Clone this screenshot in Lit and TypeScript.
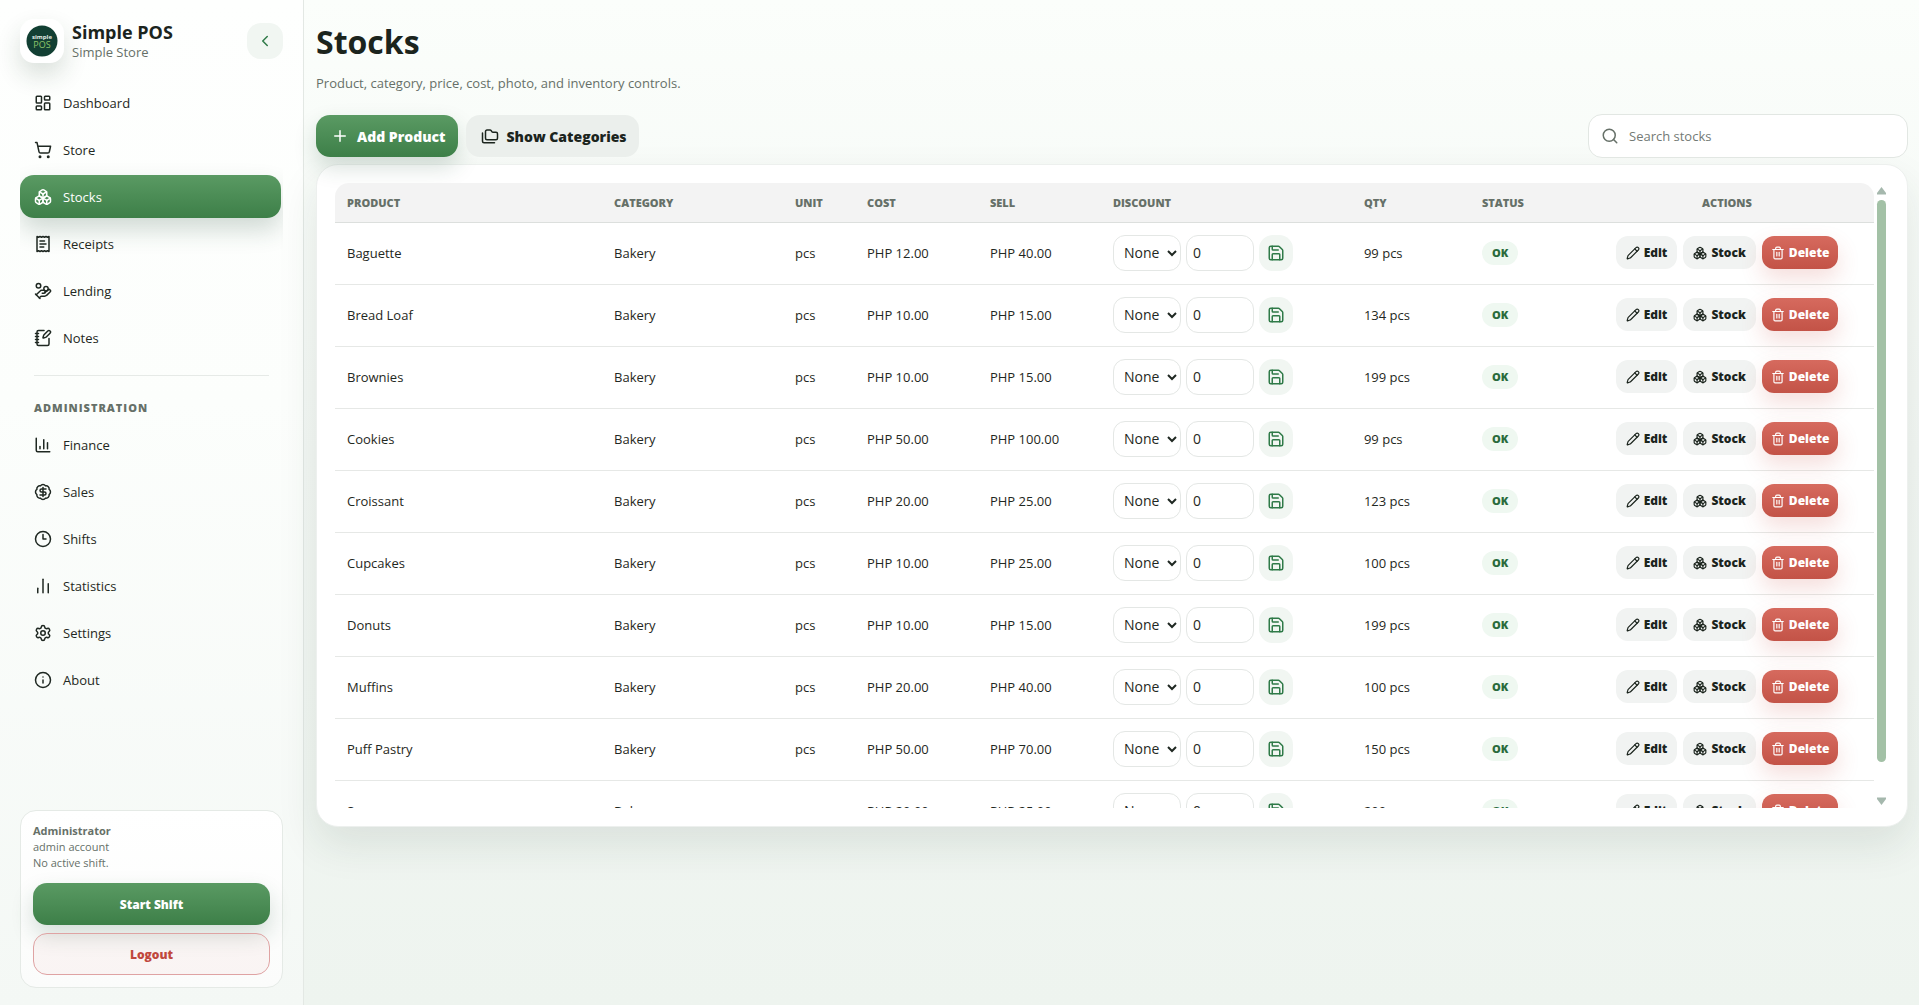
import { LitElement, html, css, svg } from "lit";
import { customElement, state } from "lit/decorators.js";
import { classMap } from "lit/directives/class-map.js";

const ICONS: Record<string, unknown> = {
  dashboard: svg`<rect width="7" height="9" x="3" y="3" rx="1"/><rect width="7" height="5" x="14" y="3" rx="1"/><rect width="7" height="9" x="14" y="12" rx="1"/><rect width="7" height="5" x="3" y="16" rx="1"/>`,
  cart: svg`<circle cx="8" cy="21" r="1"/><circle cx="19" cy="21" r="1"/><path d="M2.05 2.05h2l2.66 12.42a2 2 0 0 0 2 1.58h9.78a2 2 0 0 0 1.95-1.57l1.65-7.43H5.12"/>`,
  boxes: svg`<path d="M2.97 12.92A2 2 0 0 0 2 14.63v3.24a2 2 0 0 0 .97 1.71l3 1.8a2 2 0 0 0 2.06 0L12 19v-5.5l-5-3-4.03 2.42Z"/><path d="m7 16.5-4.74-2.85"/><path d="m7 16.5 5-3"/><path d="M7 16.5v5.17"/><path d="M12 13.5V19l3.97 2.38a2 2 0 0 0 2.06 0l3-1.8a2 2 0 0 0 .97-1.71v-3.24a2 2 0 0 0-.97-1.71L17 10.5l-5 3Z"/><path d="m17 16.5-5-3"/><path d="m17 16.5 4.74-2.85"/><path d="M17 16.5v5.17"/><path d="M7.97 4.42A2 2 0 0 0 7 6.13v4.37l5 3 5-3V6.13a2 2 0 0 0-.97-1.71l-3-1.8a2 2 0 0 0-2.06 0l-3 1.8Z"/><path d="M12 8 7.26 5.15"/><path d="m12 8 4.74-2.85"/><path d="M12 13.5V8"/>`,
  receipt: svg`<path d="M4 2v20l2-1 2 1 2-1 2 1 2-1 2 1 2-1 2 1V2l-2 1-2-1-2 1-2-1-2 1-2-1-2 1Z"/><path d="M14 8H8"/><path d="M16 12H8"/><path d="M13 16H8"/>`,
  lending: svg`<path d="M11 15h2a2 2 0 1 0 0-4h-3c-.6 0-1.1.2-1.4.6L3 17"/><path d="m7 21 1.6-1.4c.3-.4.8-.6 1.4-.6h4c1.1 0 2.1-.4 2.8-1.2l4.6-4.4a2 2 0 0 0-2.75-2.91l-4.2 3.9"/><path d="m2 16 6 6"/><circle cx="16" cy="9" r="2.9"/><circle cx="6" cy="5" r="3"/>`,
  notes: svg`<path d="M13.4 2H6a2 2 0 0 0-2 2v16a2 2 0 0 0 2 2h12a2 2 0 0 0 2-2v-7.4"/><path d="M2 6h4"/><path d="M2 10h4"/><path d="M2 14h4"/><path d="M2 18h4"/><path d="M21.378 5.626a1 1 0 1 0-3.004-3.004l-5.01 5.012a2 2 0 0 0-.506.854l-.837 2.87a.5.5 0 0 0 .62.62l2.87-.837a2 2 0 0 0 .854-.506z"/>`,
  finance: svg`<path d="M3 3v16a2 2 0 0 0 2 2h16"/><path d="M18 17V9"/><path d="M13 17V5"/><path d="M8 17v-3"/>`,
  sales: svg`<path d="M3.85 8.62a4 4 0 0 1 4.78-4.77 4 4 0 0 1 6.74 0 4 4 0 0 1 4.78 4.78 4 4 0 0 1 0 6.74 4 4 0 0 1-4.77 4.78 4 4 0 0 1-6.75 0 4 4 0 0 1-4.78-4.77 4 4 0 0 1 0-6.76Z"/><path d="M16 8h-6a2 2 0 1 0 0 4h4a2 2 0 1 1 0 4H8"/><path d="M12 18V6"/>`,
  clock: svg`<circle cx="12" cy="12" r="10"/><path d="M12 6v6h4"/>`,
  stats: svg`<path d="M5 21v-6"/><path d="M12 21V3"/><path d="M19 21V9"/>`,
  settings: svg`<path d="M9.671 4.136a2.34 2.34 0 0 1 4.659 0 2.34 2.34 0 0 0 3.319 1.915 2.34 2.34 0 0 1 2.33 4.033 2.34 2.34 0 0 0 0 3.831 2.34 2.34 0 0 1-2.33 4.033 2.34 2.34 0 0 0-3.319 1.915 2.34 2.34 0 0 1-4.659 0 2.34 2.34 0 0 0-3.32-1.915 2.34 2.34 0 0 1-2.33-4.033 2.34 2.34 0 0 0 0-3.831A2.34 2.34 0 0 1 6.35 6.051a2.34 2.34 0 0 0 3.319-1.915"/><circle cx="12" cy="12" r="3"/>`,
  info: svg`<circle cx="12" cy="12" r="10"/><path d="M12 16v-4"/><path d="M12 8h.01"/>`,
  chevron: svg`<path d="m15 18-6-6 6-6"/>`,
  plus: svg`<path d="M5 12h14"/><path d="M12 5v14"/>`,
  folders: svg`<path d="M20 17a2 2 0 0 0 2-2V9a2 2 0 0 0-2-2h-3.9a2 2 0 0 1-1.69-.9l-.81-1.2a2 2 0 0 0-1.67-.9H8a2 2 0 0 0-2 2v9a2 2 0 0 0 2 2Z"/><path d="M2 8v11a2 2 0 0 0 2 2h14"/>`,
  search: svg`<circle cx="11" cy="11" r="8"/><path d="m21 21-4.3-4.3"/>`,
  save: svg`<path d="M15.2 3a2 2 0 0 1 1.4.6l3.8 3.8a2 2 0 0 1 .6 1.4V19a2 2 0 0 1-2 2H5a2 2 0 0 1-2-2V5a2 2 0 0 1 2-2z"/><path d="M17 21v-7a1 1 0 0 0-1-1H8a1 1 0 0 0-1 1v7"/><path d="M7 3v4a1 1 0 0 0 1 1h7"/>`,
  pencil: svg`<path d="M21.174 6.812a1 1 0 0 0-3.986-3.987L3.842 16.174a2 2 0 0 0-.5.83l-1.321 4.352a.5.5 0 0 0 .623.622l4.353-1.32a2 2 0 0 0 .83-.497z"/><path d="m15 5 4 4"/>`,
  trash: svg`<path d="M3 6h18"/><path d="M19 6v14a2 2 0 0 1-2 2H7a2 2 0 0 1-2-2V6"/><path d="M8 6V4a2 2 0 0 1 2-2h4a2 2 0 0 1 2 2v2"/><path d="M10 11v6"/><path d="M14 11v6"/>`,
};

const icon = (name: string) =>
  html`<svg class="icon" viewBox="0 0 24 24" aria-hidden="true">${ICONS[name]}</svg>`;

const iconStyles = css`
  * { box-sizing: border-box; }
  .icon {
    width: 18px;
    height: 18px;
    flex: none;
    fill: none;
    stroke: currentColor;
    stroke-width: 2;
    stroke-linecap: round;
    stroke-linejoin: round;
  }
  button, input, select { font: inherit; margin: 0; }
  button { cursor: pointer; }
  .btn {
    display: inline-flex;
    align-items: center;
    justify-content: center;
    height: 42px;
    gap: 8px;
    padding: 0 13px;
    border: 1px solid transparent;
    border-radius: 14px;
    font-weight: 800;
    color: #1b241d;
    background: #ebefec;
  }
  .primary {
    color: #fff;
    border: 0;
    padding: 0 14px;
    background: linear-gradient(180deg, #5a9a63, #3d7f48);
    box-shadow: 0 10px 22px rgba(30, 80, 50, 0.18);
  }
`;

type NavItem = { icon: string; label: string };
const MAIN_NAV: NavItem[] = [
  { icon: "dashboard", label: "Dashboard" },
  { icon: "cart", label: "Store" },
  { icon: "boxes", label: "Stocks" },
  { icon: "receipt", label: "Receipts" },
  { icon: "lending", label: "Lending" },
  { icon: "notes", label: "Notes" },
];
const ADMIN_NAV: NavItem[] = [
  { icon: "finance", label: "Finance" },
  { icon: "sales", label: "Sales" },
  { icon: "clock", label: "Shifts" },
  { icon: "stats", label: "Statistics" },
  { icon: "settings", label: "Settings" },
  { icon: "info", label: "About" },
];

@customElement("pos-sidebar")
export class PosSidebar extends LitElement {
  @state() private active = "Stocks";

  static styles = [
    iconStyles,
    css`
      :host {
        display: flex;
        flex-direction: column;
        width: 304px;
        padding: 18px 20px 17px;
        border-right: 1px solid #e3e8e4;
        background: linear-gradient(180deg, #fefffe 0%, #fcfefc 40%, #f4f8f5 100%);
      }
      .brand { display: flex; align-items: center; gap: 8px; height: 46px; }
      .logo {
        width: 44px;
        height: 44px;
        padding: 6px;
        border-radius: 14px;
        background: #fff;
        box-shadow: 0 12px 24px rgba(30, 60, 40, 0.16);
      }
      .logo svg { display: block; width: 32px; height: 32px; }
      .names { flex: 1; }
      .name { font-size: 18px; line-height: 22px; font-weight: 700; color: #1b241d; }
      .store { font-size: 13px; line-height: 18px; color: #667068; }
      .collapse {
        display: grid;
        place-items: center;
        width: 36px;
        height: 36px;
        padding: 0;
        border: 0;
        border-radius: 14px;
        color: #2f7a48;
        background: #f1f6f2;
      }
      .nav { display: flex; flex-direction: column; gap: 4px; padding: 17px 2px 20px 0; overflow: hidden; }
      .link {
        display: flex;
        align-items: center;
        gap: 11px;
        height: 43px;
        padding: 0 14px;
        border-radius: 14px;
        font-size: 13px;
        color: #1f2822;
        text-decoration: none;
      }
      .active {
        color: #fff;
        background: linear-gradient(180deg, #5a9a63, #3d7f48);
        box-shadow: 0 12px 24px rgba(30, 70, 50, 0.2);
      }
      .section {
        margin: 12px 12px 2px 14px;
        padding-top: 23px;
        border-top: 1px solid #e6eae7;
        font-size: 11px;
        line-height: 18px;
        font-weight: 800;
        letter-spacing: 1px;
        color: #667068;
      }
      .account {
        display: flex;
        flex-direction: column;
        gap: 8px;
        margin-top: auto;
        padding: 12px;
        border: 1px solid #e5eae6;
        border-radius: 16px;
        background: linear-gradient(180deg, #fff, #fbfcfb);
        font-size: 12px;
      }
      .who { padding-bottom: 4px; font-size: 11px; line-height: 16px; color: #667068; }
      .who strong { display: block; }
      .logout { color: #c0483d; border-color: #dfa3a3; background: rgba(200, 60, 50, 0.04); }
    `,
  ];

  private link(item: NavItem) {
    return html`<a
      class=${classMap({ link: true, active: item.label === this.active })}
      href="#${item.label.toLowerCase()}"
      @click=${() => (this.active = item.label)}
      >${icon(item.icon)}${item.label}</a
    >`;
  }

  render() {
    return html`
      <div class="brand">
        <div class="logo">
          <svg viewBox="0 0 32 32" role="img" aria-label="Simple POS logo">
            <circle cx="16" cy="16" r="15.5" fill="#123f33" />
            <text x="16" y="13.5" text-anchor="middle" font-size="6" font-weight="700" fill="#e4eee6">simple</text>
            <text x="16" y="22.5" text-anchor="middle" font-size="9" fill="#8dc46a">POS</text>
          </svg>
        </div>
        <div class="names">
          <div class="name">Simple POS</div>
          <div class="store">Simple Store</div>
        </div>
        <button class="collapse" aria-label="Collapse sidebar">${icon("chevron")}</button>
      </div>
      <nav class="nav">
        ${MAIN_NAV.map((i) => this.link(i))}
        <div class="section">ADMINISTRATION</div>
        ${ADMIN_NAV.map((i) => this.link(i))}
      </nav>
      <div class="account">
        <div class="who"><strong>Administrator</strong>admin account<br />No active shift.</div>
        <button class="btn primary">Start Shift</button>
        <button class="btn logout">Logout</button>
      </div>
    `;
  }
}

type Product = { name: string; cost: number; sell: number; qty: number };
const PRODUCTS: Product[] = [
  { name: "Baguette", cost: 12, sell: 40, qty: 99 },
  { name: "Bread Loaf", cost: 10, sell: 15, qty: 134 },
  { name: "Brownies", cost: 10, sell: 15, qty: 199 },
  { name: "Cookies", cost: 50, sell: 100, qty: 99 },
  { name: "Croissant", cost: 20, sell: 25, qty: 123 },
  { name: "Cupcakes", cost: 10, sell: 25, qty: 100 },
  { name: "Donuts", cost: 10, sell: 15, qty: 199 },
  { name: "Muffins", cost: 20, sell: 40, qty: 100 },
  { name: "Puff Pastry", cost: 50, sell: 70, qty: 150 },
  { name: "Scones", cost: 20, sell: 25, qty: 200 },
];
const COLUMNS = ["Product", "Category", "Unit", "Cost", "Sell", "Discount", "Qty", "Status", "Actions"];
const php = (n: number) => `PHP ${n.toFixed(2)}`;

@customElement("stock-table")
export class StockTable extends LitElement {
  static styles = [
    iconStyles,
    css`
      :host {
        display: flex;
        gap: 3px;
        padding: 18px 21px 18px 18px;
        border: 1px solid #edf0ee;
        border-radius: 22px;
        background: #fff;
        box-shadow: 0 18px 40px rgba(30, 60, 40, 0.1);
      }
      .viewport { flex: 1; height: 625px; overflow: hidden; border-radius: 14px 14px 0 0; }
      .table { width: 100%; table-layout: fixed; border-collapse: separate; border-spacing: 0; color: #1f2822; }
      .product { width: 17.35%; }
      .category { width: 11.76%; }
      .unit { width: 4.68%; }
      .cost, .sell { width: 7.99%; }
      .discount { width: 16.31%; }
      .qty { width: 7.67%; }
      .status { width: 7.15%; }
      .head {
        height: 40px;
        padding: 0 12px;
        border-bottom: 1px solid #dcdfdd;
        background: #f3f3f3;
        font-size: 11px;
        font-weight: 800;
        text-align: left;
        text-transform: uppercase;
        color: #667068;
      }
      .head.actions { text-align: center; }
      .cell {
        height: 62px;
        padding: 0 12px 2px;
        border-bottom: 1px solid #e6e8e6;
        font-size: 13px;
        white-space: nowrap;
      }
      .group { display: flex; align-items: center; gap: 5px; }
      .group.actions { justify-content: center; gap: 6px; }
      .field {
        width: 68px;
        height: 36px;
        border: 1px solid #e4e7e5;
        border-radius: 12px;
        background: #fff;
        font-size: 14px;
        color: #1f2822;
      }
      .kind { padding: 0 0 0 6px; }
      .amount { padding: 0 6px; }
      .save {
        display: grid;
        place-items: center;
        width: 34px;
        height: 36px;
        padding: 0;
        border: 0;
        border-radius: 14px;
        color: #2f7a48;
        background: #f1f6f2;
      }
      .ok {
        display: inline-block;
        padding: 0 10px;
        border-radius: 12px;
        font-size: 11px;
        line-height: 24px;
        font-weight: 800;
        color: #2a6b3c;
        background: #eff8f1;
      }
      .mini { height: 33px; padding: 0 9px; gap: 4px; border-radius: 12px; font-size: 12px; background: #f1f3f2; }
      .mini .icon { width: 14px; height: 14px; }
      .danger {
        color: #fff;
        background: linear-gradient(180deg, #d66a5e, #c35347);
        border: 0;
        box-shadow: 0 10px 22px rgba(200, 70, 60, 0.18);
      }
      .bar {
        display: flex;
        flex-direction: column;
        align-items: center;
        gap: 5px;
        width: 9px;
        padding: 4px 0 3px;
      }
      .arrow { width: 9px; height: 8px; fill: #a5b8ad; }
      .track { flex: 1; width: 9px; }
      .thumb { height: 95%; border-radius: 5px; background: #a3c1a6; }
    `,
  ];

  private row(p: Product) {
    return html`<tr>
      <td class="cell">${p.name}</td>
      <td class="cell">Bakery</td>
      <td class="cell">pcs</td>
      <td class="cell">${php(p.cost)}</td>
      <td class="cell">${php(p.sell)}</td>
      <td class="cell">
        <div class="group">
          <select class="field kind" aria-label="Discount type for ${p.name}">
            <option>None</option>
          </select>
          <input class="field amount" value="0" inputmode="decimal" aria-label="Discount for ${p.name}" />
          <button class="save" aria-label="Save discount for ${p.name}">${icon("save")}</button>
        </div>
      </td>
      <td class="cell">${p.qty} pcs</td>
      <td class="cell"><span class="ok">OK</span></td>
      <td class="cell">
        <div class="group actions">
          <button class="btn mini">${icon("pencil")}Edit</button>
          <button class="btn mini">${icon("boxes")}Stock</button>
          <button class="btn mini danger">${icon("trash")}Delete</button>
        </div>
      </td>
    </tr>`;
  }

  render() {
    return html`
      <div class="viewport">
        <table class="table">
          <thead>
            <tr>
              ${COLUMNS.map((c) => html`<th class="head ${c.toLowerCase()}" scope="col">${c}</th>`)}
            </tr>
          </thead>
          <tbody>
            ${PRODUCTS.map((p) => this.row(p))}
          </tbody>
        </table>
      </div>
      <div class="bar" aria-hidden="true">
        <svg class="arrow" viewBox="0 0 9 8"><path d="M4.5 0 9 6V7.5H0V6Z" /></svg>
        <div class="track"><div class="thumb"></div></div>
        <svg class="arrow" viewBox="0 0 9 8"><path d="M4.5 8 9 2V.5H0V2Z" /></svg>
      </div>
    `;
  }
}

@customElement("app-root")
export class AppRoot extends LitElement {
  static styles = [
    iconStyles,
    css`
      :host {
        display: flex;
        min-height: 100vh;
        font-family: "Open Sans", "Noto Sans", sans-serif;
        font-size: 14px;
        color: #1f2822;
        background: linear-gradient(180deg, #fbfefb 0%, #f3f7f4 45%, #eef4ef 100%);
      }
      .main { flex: 1; min-width: 0; padding: 18px 11px 18px 12px; }
      .title { margin: 0; font-size: 32px; line-height: 48px; font-weight: 700; color: #1b241d; }
      .lead { margin: 6px 0 20px; font-size: 13px; line-height: 22px; color: #667068; }
      .toolbar { display: flex; align-items: center; gap: 8px; padding-bottom: 6px; }
      .toolbar .btn { padding: 0 12px 0 15px; border: 0; }
      .search {
        display: flex;
        align-items: center;
        gap: 10px;
        width: 320px;
        height: 44px;
        margin-left: auto;
        padding: 0 12px;
        border: 1px solid #e2e7e3;
        border-radius: 14px;
        background: #fff;
        font-size: 13px;
        color: #667068;
      }
      .query { flex: 1; min-width: 0; padding: 0; border: 0; outline: 0; background: none; color: inherit; }
      .query::placeholder { color: #737a75; }
    `,
  ];

  render() {
    return html`
      <pos-sidebar></pos-sidebar>
      <main class="main">
        <h1 class="title">Stocks</h1>
        <p class="lead">Product, category, price, cost, photo, and inventory controls.</p>
        <div class="toolbar">
          <button class="btn primary">${icon("plus")}Add Product</button>
          <button class="btn">${icon("folders")}Show Categories</button>
          <label class="search">
            ${icon("search")}
            <input class="query" type="search" placeholder="Search stocks" aria-label="Search stocks" />
          </label>
        </div>
        <stock-table></stock-table>
      </main>
    `;
  }
}
